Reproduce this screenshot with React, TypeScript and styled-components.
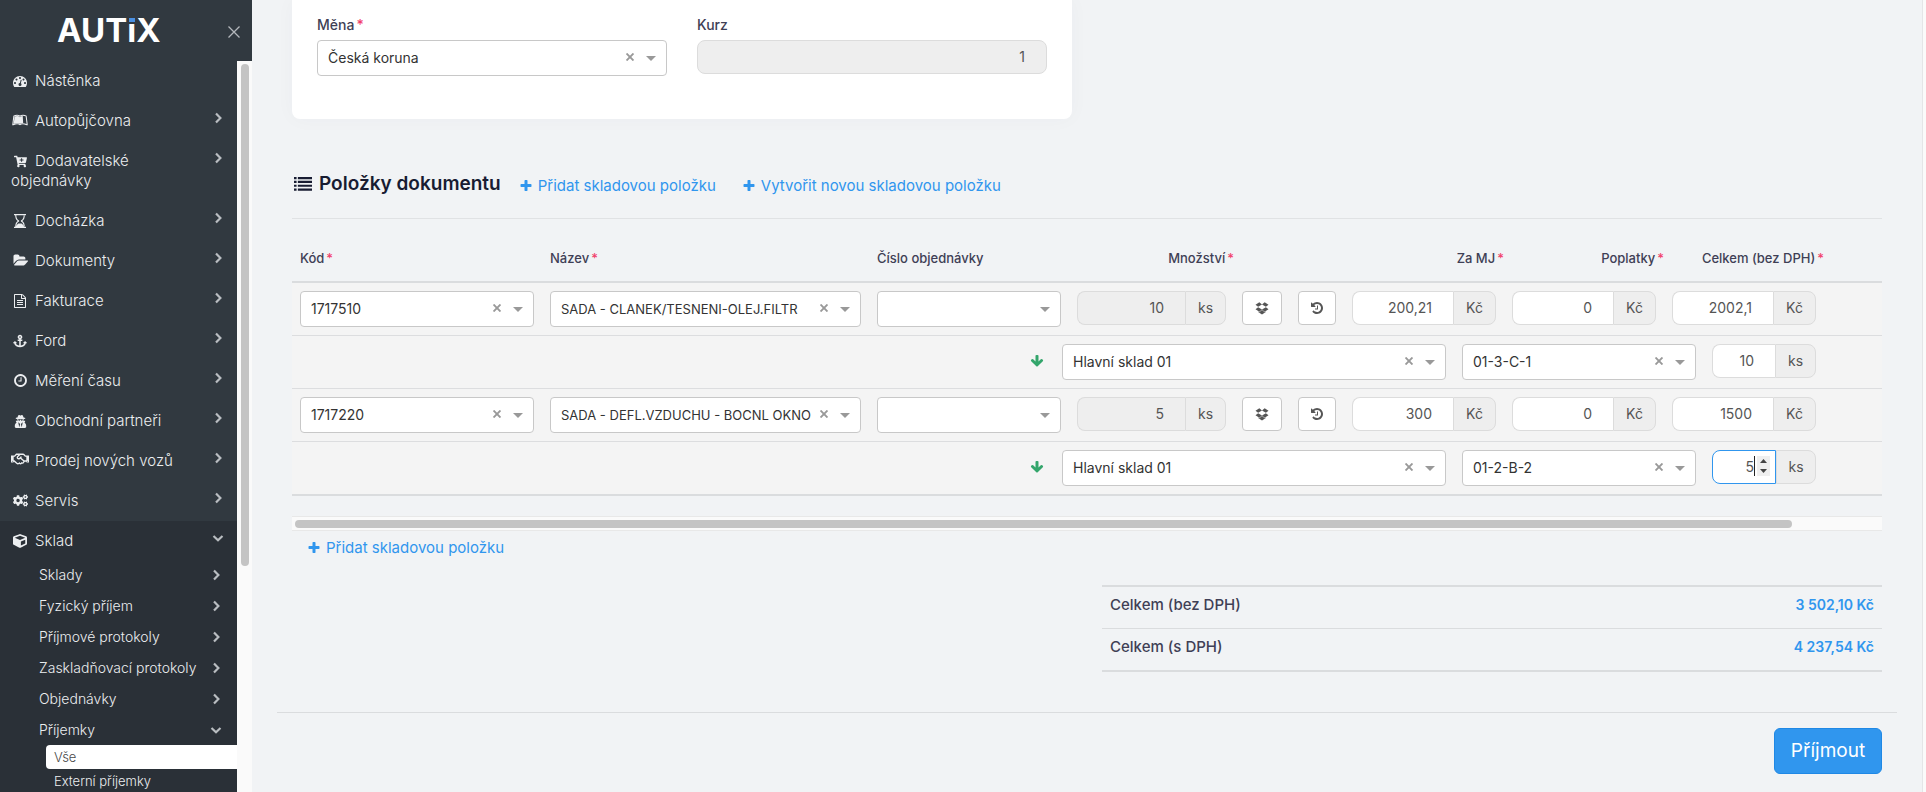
import React from "react";
import styled, { createGlobalStyle } from "styled-components";
import { FaAnchor, FaCartPlus, FaCogs, FaCube, FaLeanpub, FaRegHandshake, FaUserSecret } from "react-icons/fa";

const Global = createGlobalStyle`
  *, *::before, *::after { box-sizing: border-box; }
  body {
    margin: 0;
    background: #f1f3f5;
    color: #3f3f55;
    font-family: Inter, "Open Sans", sans-serif;
    font-size: 14px;
    line-height: 20px;
  }
  button, input, select { font: inherit; margin: 0; }
  a { text-decoration: none; }
`;

/* ---------- icons ---------- */

const Glyph = styled.svg<{ $w?: number; $h?: number }>`
  display: block;
  flex: none;
  width: ${(p) => p.$w ?? 14}px;
  height: ${(p) => p.$h ?? 14}px;
  fill: currentColor;
`;

const paths = {
  tachometer:
    "M384 1152q0-53-37.5-90.5t-90.5-37.5-90.5 37.5-37.5 90.5 37.5 90.5 90.5 37.5 90.5-37.5 37.5-90.5zm192-448q0-53-37.5-90.5t-90.5-37.5-90.5 37.5-37.5 90.5 37.5 90.5 90.5 37.5 90.5-37.5 37.5-90.5zm428 481l101-382q6-26-7.5-48.5t-38.5-29.5-48 6.5-30 39.5l-101 382q-60 5-107 43.5t-63 98.5q-20 77 20 146t117 89 146-20 89-117q16-60-6-117t-72-91zm660-33q0-53-37.5-90.5t-90.5-37.5-90.5 37.5-37.5 90.5 37.5 90.5 90.5 37.5 90.5-37.5 37.5-90.5zm-640-640q0-53-37.5-90.5t-90.5-37.5-90.5 37.5-37.5 90.5 37.5 90.5 90.5 37.5 90.5-37.5 37.5-90.5zm448 192q0-53-37.5-90.5t-90.5-37.5-90.5 37.5-37.5 90.5 37.5 90.5 90.5 37.5 90.5-37.5 37.5-90.5zm320 448q0 261-141 483-19 29-54 29h-1402q-35 0-54-29-141-221-141-483 0-182 71-348t191-286 286-191 348-71 348 71 286 191 191 286 71 348z",
  folder:
    "M1943 952q0 31-31 66l-336 396q-43 51-120.5 86.5t-143.5 35.5h-1088q-34 0-60.5-13t-26.5-43q0-31 31-66l336-396q43-51 120.5-86.5t143.5-35.5h1088q34 0 60.5 13t26.5 43zm-343-344v160h-832q-94 0-197 47.5t-164 119.5l-337 396-5 6q0-4-.5-12.5t-.5-12.5v-960q0-92 66-158t158-66h320q92 0 158 66t66 158v32h544q92 0 158 66t66 158z",
  file: "M1596 380q28 28 48 76t20 88v1152q0 40-28 68t-68 28h-1344q-40 0-68-28t-28-68v-1600q0-40 28-68t68-28h896q40 0 88 20t76 48zm-444-244v376h376q-10-29-22-41l-313-313q-12-12-41-22zm384 1528v-1024h-416q-40 0-68-28t-28-68v-416h-768v1536h1280zm-1024-864q0-14 9-23t23-9h704q14 0 23 9t9 23v64q0 14-9 23t-23 9h-704q-14 0-23-9t-9-23v-64zm736 224q14 0 23 9t9 23v64q0 14-9 23t-23 9h-704q-14 0-23-9t-9-23v-64q0-14 9-23t23-9h704zm0 256q14 0 23 9t9 23v64q0 14-9 23t-23 9h-704q-14 0-23-9t-9-23v-64q0-14 9-23t23-9h704z",
  clock:
    "M1024 544v448q0 14-9 23t-23 9h-320q-14 0-23-9t-9-23v-64q0-14 9-23t23-9h224v-352q0-14 9-23t23-9h64q14 0 23 9t9 23zm416 352q0-148-73-273t-198-198-273-73-273 73-198 198-73 273 73 273 198 198 273 73 273-73 198-198 73-273zm224 0q0 209-103 385.5t-279.5 279.5-385.5 103-385.5-103-279.5-279.5-103-385.5 103-385.5 279.5-279.5 385.5-103 385.5 103 279.5 279.5 103 385.5z",
  plus: "M1600 736v192q0 40-28 68t-68 28h-416v416q0 40-28 68t-68 28h-192q-40 0-68-28t-28-68v-416h-416q-40 0-68-28t-28-68v-192q0-40 28-68t68-28h416v-416q0-40 28-68t68-28h192q40 0 68 28t28 68v416h416q40 0 68 28t28 68z",
  arrow:
    "M1675 832q0 53-37 90l-651 652q-39 37-91 37-53 0-90-37l-651-652q-38-36-38-90 0-53 38-91l74-75q39-37 91-37 53 0 90 37l294 294v-704q0-52 38-90t90-38h128q52 0 90 38t38 90v704l294-294q37-37 90-37 52 0 91 37l75 75q37 39 37 91z",
  history:
    "M1664 896q0 156-61 298t-164 245-245 164-298 61q-172 0-327-72.5t-264-204.5q-7-10-6.5-22.5t8.5-20.5l137-138q10-9 25-9 16 2 23 12 73 95 179 147t225 52q104 0 198.5-40.5t163.5-109.5 109.5-163.5 40.5-198.5-40.5-198.5-109.5-163.5-163.5-109.5-198.5-40.5q-98 0-188 35.5t-160 101.5l137 138q31 30 14 69-17 40-59 40h-448q-26 0-45-19t-19-45v-448q0-42 40-59 39-17 69 14l130 129q107-101 244.5-156.5t284.5-55.5q156 0 298 61t245 164 164 245 61 298zm-640-288v448q0 14-9 23t-23 9h-320q-14 0-23-9t-9-23v-64q0-14 9-23t23-9h224v-352q0-14 9-23t23-9h64q14 0 23 9t9 23z",
  dropbox:
    "M402 790l494 305-342 285-490-319zM1390 790l338 271-490 319-342-285zM554 161l342 285-494 304-338-270zM1238 161l490 319-338 270-494-304zM407 1340l147 96 342-284 342 284 147-96v80l-489 293-489-293z",
  list: "M0 200h256v220H0zM0 580h256v220H0zM0 960h256v220H0zM0 1340h256v220H0zM384 200h1408v220H384zM384 580h1408v220H384zM384 960h1408v220H384zM384 1340h1408v220H384z",
};

type PathName = keyof typeof paths;

const PathIcon = ({ name, size = 14, box = "0 0 1792 1792" }: { name: PathName; size?: number; box?: string }) => (
  <Glyph $w={size} $h={size} viewBox={box} aria-hidden="true">
    <path d={paths[name]} />
  </Glyph>
);

const Hourglass = () => (
  <Glyph viewBox="0 0 14 14" aria-hidden="true">
    <path d="M1 0h12v1.2H1zM1 12.8h12V14H1zM2.2 1h1.1c0 3 1 4.700 2.800 5.500v1C4.300 8.200 3.300 10 3.300 13H2.200c0-2.900.8-5 2.500-6C3 6 2.200 4 2.200 1zM11.800 1h-1.100c0 3-1 4.700-2.800 5.500v1c1.800.7 2.800 2.500 2.800 5.500h1.100c0-2.900-.8-5-2.500-6 1.700-1 2.500-3 2.500-6zM3.200 13c.2-2 1.300-3 2.300-3.500h3c1 .5 2.100 1.500 2.300 3.500z" />
  </Glyph>
);

const Chevron = ({ open }: { open?: boolean }) => (
  <Glyph $w={12} $h={12} viewBox="0 0 12 12" aria-hidden="true">
    <path
      d={open ? "M1.500 4l4.500 4.200L10.500 4" : "M4 1.500L8.400 6 4 10.500"}
      fill="none"
      stroke="currentColor"
      strokeWidth="2.200"
    />
  </Glyph>
);

/* ---------- shell ---------- */

const Shell = styled.div`
  display: flex;
  height: 100vh;
  overflow: hidden;
`;

const Sidebar = styled.aside`
  display: flex;
  flex-direction: column;
  flex: none;
  width: 252px;
  background: #313940;
  color: #eceef0;
`;

const Brand = styled.header`
  display: flex;
  align-items: center;
  justify-content: space-between;
  flex: none;
  height: 61px;
  padding: 0 11px 2px 57px;
`;

const Logo = styled.a`
  color: #fff;
  font-size: 33px;
  line-height: 40px;
  font-weight: 700;
`;

const LogoI = styled.span`
  position: relative;
  &::before {
    content: "";
    position: absolute;
    left: 1px;
    right: 1px;
    top: 6px;
    height: 7px;
    background: #313940;
  }
  &::after {
    content: "";
    position: absolute;
    left: 2px;
    width: 6px;
    top: 8px;
    height: 4px;
    background: #4a90e2;
  }
`;

const CloseButton = styled.button`
  display: flex;
  padding: 4px 0 0;
  border: 0;
  background: none;
  color: #b4b8bc;
`;

const SidebarBody = styled.div`
  display: flex;
  flex: 1;
  min-height: 0;
`;

const Nav = styled.nav`
  flex: 1;
  min-width: 0;
  overflow: hidden;
`;

const SideTrack = styled.div`
  width: 15px;
  padding: 3px 3px 0 4px;
  background: #fafafa;
`;

const SideThumb = styled.div`
  height: 69%;
  border-radius: 4px;
  background: #c4c4c4;
`;

const List = styled.ul`
  list-style: none;
  margin: 0;
  padding: 0;
`;

const Item = styled.li<{ $active?: boolean }>`
  background: ${(p) => (p.$active ? "#2a3037" : "transparent")};
`;

const ItemLink = styled.a<{ $open?: boolean }>`
  display: flex;
  justify-content: space-between;
  padding: 10px 13px ${(p) => (p.$open ? 8 : 10)}px 11px;
  color: inherit;
  font-size: 15px;
  font-weight: 300;
`;

const ItemLabel = styled.span`
  width: 180px;
`;

const ItemIcon = styled.span`
  display: inline-flex;
  align-items: center;
  justify-content: center;
  width: 18px;
  height: 14px;
  margin-right: 6px;
  vertical-align: -2px;
`;

const ItemMark = styled.span`
  padding-top: 1px;
  color: #b9bdc1;
`;

const SubLink = styled.a`
  display: flex;
  align-items: center;
  justify-content: space-between;
  height: 31px;
  padding: 0 15px 0 39px;
  color: inherit;
  font-size: 14px;
  font-weight: 300;
  white-space: nowrap;
`;

const LeafLink = styled.a<{ $current?: boolean }>`
  display: block;
  height: 24px;
  margin-left: 46px;
  padding-left: 8px;
  border-radius: 4px 0 0 4px;
  background: ${(p) => (p.$current ? "#fff" : "transparent")};
  color: ${(p) => (p.$current ? "#4a4a4a" : "inherit")};
  font-size: 13px;
  line-height: 24px;
  font-weight: 300;
`;

/* ---------- main ---------- */

const Main = styled.main`
  flex: 1;
  min-width: 0;
  padding: 0 25px;
  overflow: hidden;
`;

const PageTrack = styled.div`
  flex: none;
  width: 4px;
  border-left: 1px solid #e4e5e7;
  background: #fafafa;
`;

const Content = styled.div`
  padding: 0 15px;
`;

const Card = styled.section`
  display: grid;
  grid-template-columns: 1fr 1fr;
  gap: 30px;
  width: 780px;
  max-width: 100%;
  padding: 15px 25px 43px;
  border-radius: 0 0 8px 8px;
  background: #fff;
  box-shadow: 0 0 20px rgba(60, 70, 90, 0.03);
`;

const Field = styled.div`
  display: flex;
  flex-direction: column;
`;

const Label = styled.label`
  margin-bottom: 5px;
  font-weight: 500;
`;

const Star = styled.span`
  margin-left: 2px;
  color: #f1416c;
`;

const SelectBox = styled.div<{ $width?: number }>`
  position: relative;
  flex: none;
  width: ${(p) => (p.$width ? p.$width + "px" : "100%")};
`;

const NativeSelect = styled.select<{ $compact?: boolean }>`
  display: block;
  appearance: none;
  width: 100%;
  height: 36px;
  padding: 0 40px 0 10px;
  border: 1px solid #c8c8c8;
  border-radius: 4px;
  background: #fff;
  color: #333;
  font-size: ${(p) => (p.$compact ? 13 : 14)}px;
`;

const SelectMarks = styled.div`
  position: absolute;
  top: 0;
  right: 11px;
  display: flex;
  align-items: center;
  gap: 12px;
  height: 36px;
  color: #999;
  pointer-events: none;
`;

const ClearButton = styled.button`
  padding: 0 0 3px;
  border: 0;
  background: none;
  color: #999;
  line-height: 0;
  pointer-events: auto;
`;

const Group = styled.div<{ $width?: number }>`
  position: relative;
  display: flex;
  flex: none;
  width: ${(p) => (p.$width ? p.$width + "px" : "100%")};
`;

const NumberInput = styled.input<{ $focus?: boolean; $alone?: boolean }>`
  flex: 0 1 auto;
  min-width: 0;
  width: 100%;
  height: 34px;
  padding: 0 21px 2px 10px;
  border: 1px solid ${(p) => (p.$focus ? "#3096ee" : "#dcdcdc")};
  border-right-width: ${(p) => (p.$alone || p.$focus ? 1 : 0)}px;
  border-radius: ${(p) => (p.$alone ? "8px" : "8px 0 0 8px")};
  outline: 0;
  background: #fff;
  color: #555;
  text-align: right;
  &:disabled {
    background: #eee;
  }
`;

const Unit = styled.span<{ $width: number }>`
  flex: none;
  width: ${(p) => p.$width}px;
  height: 34px;
  border: 1px solid #dcdcdc;
  border-radius: 0 8px 8px 0;
  background: #eee;
  color: #555;
  line-height: 32px;
  text-align: center;
`;

const Stepper = styled.span`
  position: absolute;
  top: 6px;
  right: 46px;
  display: flex;
  flex-direction: column;
  width: 13px;
  height: 20px;
  background: #efefef;
`;

const StepButton = styled.button`
  display: flex;
  flex: 1;
  align-items: center;
  justify-content: center;
  padding: 0;
  border: 0;
  background: none;
  color: #444;
`;

const TextCursor = styled.span`
  position: absolute;
  top: 6px;
  right: 61px;
  width: 1px;
  height: 20px;
  background: #222;
`;

const SquareButton = styled.button`
  display: flex;
  align-items: center;
  justify-content: center;
  width: 100%;
  height: 34px;
  padding: 0;
  border: 1px solid #c8c8c8;
  border-radius: 4px;
  background: #fff;
  color: #555;
`;

const SectionHead = styled.div`
  display: flex;
  align-items: center;
  gap: 18px;
  margin-top: 49px;
  padding: 4px 2px 22px;
  border-bottom: 1px solid #e0e2e4;
`;

const SectionTitle = styled.h2`
  display: flex;
  align-items: center;
  gap: 7px;
  margin: 0;
  color: #181c32;
  font-size: 19px;
  line-height: 24px;
  font-weight: 600;
`;

const AddLink = styled.a`
  display: inline-flex;
  align-items: center;
  gap: 5px;
  margin-right: 8px;
  padding-top: 4px;
  color: #3096ee;
  font-size: 15px;
  white-space: nowrap;
`;

const TableWrap = styled.div`
  overflow: hidden;
`;

const ItemsTable = styled.table`
  width: 100%;
  table-layout: fixed;
  border-collapse: separate;
  border-spacing: 0;
  border-bottom: 2px solid #dadcde;
`;

const HeadCell = styled.th<{ $end?: boolean; $width?: number }>`
  width: ${(p) => (p.$width ? p.$width + "px" : "auto")};
  height: 64px;
  padding: 16px ${(p) => (p.$end ? 0 : 8)}px 0 8px;
  border-bottom: 2px solid #dadcde;
  font-size: 13px;
  font-weight: 500;
  text-align: ${(p) => (p.$end ? "right" : "left")};
  white-space: nowrap;
`;

const BodyRow = styled.tr`
  background: #f4f4f4;
  & + & > td {
    border-top: 1px solid #dcdddf;
  }
`;

const Cell = styled.td`
  padding: 8px;
  vertical-align: top;
`;

const StockLine = styled.div`
  display: flex;
  justify-content: flex-end;
  gap: 16px;
  padding-right: 58px;
`;

const ArrowSpot = styled.span`
  display: flex;
  align-items: center;
  justify-content: center;
  width: 18px;
  height: 34px;
  color: #33a56b;
`;

const ScrollTrack = styled.div`
  height: 15px;
  margin-top: 20px;
  padding: 3px 90px 3px 3px;
  border: 1px solid #e8e8e8;
  border-width: 1px 0;
  background: #fafafa;
`;

const ScrollThumb = styled.div`
  height: 8px;
  border-radius: 4px;
  background: #c4c4c4;
`;

const BelowTable = styled.div`
  padding: 3px 15px 0;
`;

const Totals = styled.table`
  width: 780px;
  max-width: 100%;
  margin: 25px 0 40px auto;
  border-collapse: separate;
  border-spacing: 0;
  border: solid #dadcde;
  border-width: 2px 0;
`;

const TotalRow = styled.tr`
  & > * {
    height: 41px;
    padding: 0 8px 6px;
    font-size: 15px;
    font-weight: 500;
    text-align: left;
  }
  & > td {
    color: #3096ee;
    font-size: 14px;
    font-weight: 600;
    text-align: right;
  }
  & + & > * {
    height: 42px;
    border-top: 1px solid #dadcde;
  }
`;

const Footer = styled.footer`
  display: flex;
  justify-content: flex-end;
  padding: 15px 15px 18px;
  border-top: 1px solid #dadcde;
`;

const Submit = styled.button`
  height: 46px;
  width: 108px;
  padding: 0;
  border: 1px solid #1f88e5;
  border-radius: 6px;
  background: #3096ee;
  color: #fff;
  font-size: 19px;
  font-weight: 400;
`;

/* ---------- parts ---------- */

type DropdownProps = {
  id?: string;
  label?: string;
  value: string;
  width?: number;
  clearable?: boolean;
  compact?: boolean;
};

const Dropdown = ({ id, label, value, width, clearable = true, compact }: DropdownProps) => (
  <SelectBox $width={width}>
    <NativeSelect id={id} aria-label={label} defaultValue={value} $compact={compact}>
      <option value={value}>{value}</option>
    </NativeSelect>
    <SelectMarks>
      {clearable && (
        <ClearButton type="button" aria-label="Vymazat">
          <Glyph $w={8} $h={8} viewBox="0 0 8 8">
            <path d="M.5 0.500l7 7M7.500 0.500l-7 7" stroke="currentColor" strokeWidth="1.900" />
          </Glyph>
        </ClearButton>
      )}
      <Glyph $w={10} $h={5} viewBox="0 0 10 5" aria-hidden="true">
        <path d="M0 0h10L5 5z" />
      </Glyph>
    </SelectMarks>
  </SelectBox>
);

const Amount = ({ label, value, unit, disabled, width }: { label: string; value: string; unit: string; disabled?: boolean; width?: number }) => (
  <Group $width={width}>
    <NumberInput aria-label={label} defaultValue={value} disabled={disabled} />
    <Unit $width={unit === "ks" ? 41 : 43}>{unit}</Unit>
  </Group>
);

const FocusedAmount = ({ value }: { value: string }) => (
  <Group $width={104}>
    <NumberInput $focus aria-label="Množství na pozici" defaultValue={value} />
    <Unit $width={40}>ks</Unit>
    <TextCursor />
    <Stepper>
      <StepButton type="button" aria-label="Zvýšit">
        <Glyph $w={7} $h={4} viewBox="0 0 7 4"><path d="M0 4h7L3.500 0z" /></Glyph>
      </StepButton>
      <StepButton type="button" aria-label="Snížit">
        <Glyph $w={7} $h={4} viewBox="0 0 7 4"><path d="M0 0h7L3.500 4z" /></Glyph>
      </StepButton>
    </Stepper>
  </Group>
);

const menu: { label: string; icon: React.ReactNode; leaf?: boolean }[] = [
  { label: "Nástěnka", icon: <PathIcon name="tachometer" />, leaf: true },
  { label: "Autopůjčovna", icon: <FaLeanpub size={16} /> },
  { label: "Dodavatelské objednávky", icon: <FaCartPlus size={13} /> },
  { label: "Docházka", icon: <Hourglass /> },
  { label: "Dokumenty", icon: <PathIcon name="folder" size={15} box="0 0 1943 1792" /> },
  { label: "Fakturace", icon: <PathIcon name="file" /> },
  { label: "Ford", icon: <FaAnchor size={14} /> },
  { label: "Měření času", icon: <PathIcon name="clock" size={15} /> },
  { label: "Obchodní partneři", icon: <FaUserSecret size={13} /> },
  { label: "Prodej nových vozů", icon: <FaRegHandshake size={18} /> },
  { label: "Servis", icon: <FaCogs size={15} /> },
];

const submenu = ["Sklady", "Fyzický příjem", "Příjmové protokoly", "Zaskladňovací protokoly", "Objednávky"];

const items = [
  { code: "1717510", name: "SADA - CLANEK/TESNENI-OLEJ.FILTR", qty: "10", price: "200,21", fee: "0", total: "2002,1", place: "01-3-C-1" },
  { code: "1717220", name: "SADA - DEFL.VZDUCHU - BOCNL OKNO", qty: "5", price: "300", fee: "0", total: "1500", place: "01-2-B-2", focused: true },
];

const Required = () => <Star>*</Star>;

export default function App() {
  return (
    <>
      <Global />
      <Shell>
        <Sidebar>
          <Brand>
            <Logo href="#">AUT<LogoI>i</LogoI>X</Logo>
            <CloseButton type="button" aria-label="Zavřít menu">
              <Glyph viewBox="0 0 14 14">
                <path d="M1.500 1.500l11 11M12.500 1.500l-11 11" stroke="currentColor" strokeWidth="1.300" />
              </Glyph>
            </CloseButton>
          </Brand>
          <SidebarBody>
            <Nav>
              <List>
                {menu.map((m) => (
                  <Item key={m.label}>
                    <ItemLink href="#">
                      <ItemLabel><ItemIcon>{m.icon}</ItemIcon>{m.label}</ItemLabel>
                      {!m.leaf && <ItemMark><Chevron /></ItemMark>}
                    </ItemLink>
                  </Item>
                ))}
                <Item $active>
                  <ItemLink href="#" $open>
                    <ItemLabel><ItemIcon><FaCube size={14} /></ItemIcon>Sklad</ItemLabel>
                    <ItemMark><Chevron open /></ItemMark>
                  </ItemLink>
                  <List>
                    {submenu.map((s) => (
                      <li key={s}>
                        <SubLink href="#">{s}<ItemMark><Chevron /></ItemMark></SubLink>
                      </li>
                    ))}
                    <li>
                      <SubLink href="#">Příjemky<ItemMark><Chevron open /></ItemMark></SubLink>
                      <LeafLink href="#" $current>Vše</LeafLink>
                      <LeafLink href="#">Externí příjemky</LeafLink>
                    </li>
                  </List>
                </Item>
              </List>
            </Nav>
            <SideTrack><SideThumb /></SideTrack>
          </SidebarBody>
        </Sidebar>

        <Main>
          <Content>
            <Card>
              <Field>
                <Label htmlFor="currency">Měna<Required /></Label>
                <Dropdown id="currency" value="Česká koruna" />
              </Field>
              <Field>
                <Label htmlFor="rate">Kurz</Label>
                <NumberInput id="rate" $alone defaultValue="1" disabled />
              </Field>
            </Card>

            <SectionHead>
              <SectionTitle><PathIcon name="list" size={18} />Položky dokumentu</SectionTitle>
              <AddLink href="#"><PathIcon name="plus" />Přidat skladovou položku</AddLink>
              <AddLink href="#"><PathIcon name="plus" />Vytvořit novou skladovou položku</AddLink>
            </SectionHead>

            <TableWrap>
              <ItemsTable>
                <thead>
                  <tr>
                    <HeadCell $width={250}>Kód<Required /></HeadCell>
                    <HeadCell>Název<Required /></HeadCell>
                    <HeadCell $width={200}>Číslo objednávky</HeadCell>
                    <HeadCell $width={165} $end>Množství<Required /></HeadCell>
                    <HeadCell $width={56} />
                    <HeadCell $width={54} />
                    <HeadCell $width={160} $end>Za MJ<Required /></HeadCell>
                    <HeadCell $width={160} $end>Poplatky<Required /></HeadCell>
                    <HeadCell $width={160} $end>Celkem (bez DPH)<Required /></HeadCell>
                    <HeadCell $width={58} />
                  </tr>
                </thead>
                <tbody>
                  {items.map((r) => (
                    <React.Fragment key={r.code}>
                      <BodyRow>
                        <Cell><Dropdown label="Kód" value={r.code} /></Cell>
                        <Cell><Dropdown label="Název" value={r.name} compact /></Cell>
                        <Cell><Dropdown label="Číslo objednávky" value="" clearable={false} /></Cell>
                        <Cell><Amount label="Množství" value={r.qty} unit="ks" disabled /></Cell>
                        <Cell><SquareButton type="button" aria-label="Balení"><PathIcon name="dropbox" /></SquareButton></Cell>
                        <Cell><SquareButton type="button" aria-label="Historie"><PathIcon name="history" /></SquareButton></Cell>
                        <Cell><Amount label="Za MJ" value={r.price} unit="Kč" /></Cell>
                        <Cell><Amount label="Poplatky" value={r.fee} unit="Kč" /></Cell>
                        <Cell><Amount label="Celkem (bez DPH)" value={r.total} unit="Kč" /></Cell>
                        <Cell />
                      </BodyRow>
                      <BodyRow>
                        <Cell colSpan={10}>
                          <StockLine>
                            <ArrowSpot><PathIcon name="arrow" /></ArrowSpot>
                            <Dropdown label="Sklad" value="Hlavní sklad 01" width={384} />
                            <Dropdown label="Pozice" value={r.place} width={234} />
                            {r.focused ? <FocusedAmount value={r.qty} /> : <Amount label="Množství na pozici" value={r.qty} unit="ks" width={104} />}
                          </StockLine>
                        </Cell>
                      </BodyRow>
                    </React.Fragment>
                  ))}
                </tbody>
              </ItemsTable>
            </TableWrap>
            <ScrollTrack><ScrollThumb /></ScrollTrack>

            <BelowTable>
              <AddLink href="#"><PathIcon name="plus" />Přidat skladovou položku</AddLink>
            </BelowTable>

            <Totals>
              <tbody>
                <TotalRow><th scope="row">Celkem (bez DPH)</th><td>3 502,10 Kč</td></TotalRow>
                <TotalRow><th scope="row">Celkem (s DPH)</th><td>4 237,54 Kč</td></TotalRow>
              </tbody>
            </Totals>
          </Content>
          <Footer>
            <Submit type="submit">Příjmout</Submit>
          </Footer>
        </Main>
        <PageTrack />
      </Shell>
    </>
  );
}
